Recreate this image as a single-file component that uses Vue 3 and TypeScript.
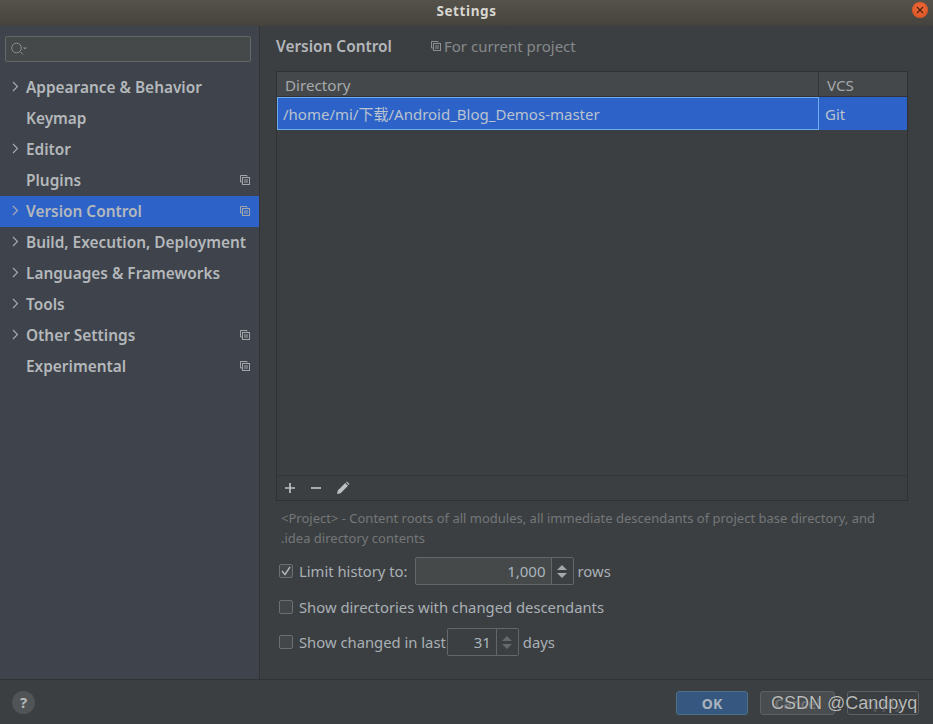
<script setup lang="ts">
interface NavItem { label: string; arrow: boolean; copy: boolean; active?: boolean }
const items: NavItem[] = [
  { label: 'Appearance & Behavior', arrow: true, copy: false },
  { label: 'Keymap', arrow: false, copy: false },
  { label: 'Editor', arrow: true, copy: false },
  { label: 'Plugins', arrow: false, copy: true },
  { label: 'Version Control', arrow: true, copy: true, active: true },
  { label: 'Build, Execution, Deployment', arrow: true, copy: false },
  { label: 'Languages & Frameworks', arrow: true, copy: false },
  { label: 'Tools', arrow: true, copy: false },
  { label: 'Other Settings', arrow: true, copy: true },
  { label: 'Experimental', arrow: false, copy: true },
]
</script>

<template>
  <div class="win">
    <header class="title">
      <span class="title-text">Settings</span>
      <span class="close">
        <svg width="8" height="8" viewBox="0 0 8 8"><path d="M1 1l6 6M7 1L1 7" stroke="#4a2210" stroke-width="1.2" /></svg>
      </span>
    </header>
    <div class="main">
      <aside class="side">
        <div class="search">
          <svg width="18" height="14" viewBox="0 0 18 14" fill="none">
            <circle cx="5.5" cy="6" r="4.8" stroke="#8b8f92" />
            <path d="M9 9.5L12 12.5" stroke="#8b8f92" />
            <path d="M12 5.5h4l-2 2z" fill="#8b8f92" />
          </svg>
        </div>
        <nav class="nav">
          <div v-for="it in items" :key="it.label" class="row" :class="{ active: it.active }">
            <svg v-if="it.arrow" class="arrow" width="7" height="11" viewBox="0 0 7 11" fill="none">
              <path d="M1 1l4.5 4.5L1 10" stroke="#a9adb0" stroke-width="1.1" />
            </svg>
            <span class="row-label">{{ it.label }}</span>
            <svg v-if="it.copy" class="copy" width="10" height="10" viewBox="0 0 10 10" fill="none">
              <path d="M7 1.5V.5H.5V7h1.5" stroke="#a2a6a9" />
              <rect x="2.5" y="2.5" width="7" height="7" stroke="#a2a6a9" />
              <path d="M4 5h4M4 7h4" stroke="#a2a6a9" />
            </svg>
          </div>
        </nav>
      </aside>
      <section class="content">
        <div class="heading">
          <span class="h-title">Version Control</span>
          <svg class="h-copy" width="10" height="10" viewBox="0 0 10 10" fill="none">
            <path d="M7 1.5V.5H.5V7h1.5" stroke="#8b8f92" />
            <rect x="2.5" y="2.5" width="7" height="7" stroke="#8b8f92" />
            <path d="M4 5h4M4 7h4" stroke="#8b8f92" />
          </svg>
          <span class="h-sub">For current project</span>
        </div>
        <div class="table">
          <div class="thead">
            <div class="col-dir th">Directory</div>
            <div class="col-vcs th vcs-th">VCS</div>
          </div>
          <div class="tr">
            <div class="col-dir td-dir">/home/mi/下载/Android_Blog_Demos-master</div>
            <div class="col-vcs td-vcs">Git</div>
          </div>
          <div class="tbody"></div>
          <div class="toolbar">
            <svg width="12" height="12" viewBox="0 0 12 12"><path d="M6 1v10M1 6h10" stroke="#bcc0c3" stroke-width="1.7" /></svg>
            <svg width="12" height="12" viewBox="0 0 12 12"><path d="M1 6h10" stroke="#bcc0c3" stroke-width="1.7" /></svg>
            <svg width="14" height="14" viewBox="0 0 14 14"><path d="M1 13l.8-3.6L9.2 2l2.8 2.8-7.4 7.4zM10 1.2l.9-.7 2.6 2.6-.7.9z" fill="#bcc0c3" /></svg>
          </div>
        </div>
        <p class="hint">&lt;Project&gt; - Content roots of all modules, all immediate descendants of project base directory, and<br />.idea directory contents</p>
        <div class="opt opt-1">
          <span class="cb">
            <svg width="10" height="10" viewBox="0 0 10 10" fill="none"><path d="M1 5l3 3.5L9 1" stroke="#b4b8bb" stroke-width="1.4" /></svg>
          </span>
          <span class="lbl">Limit history to:</span>
          <span class="spin spin-wide">
            <span class="spin-val">1,000</span>
            <span class="spin-btn">
              <i class="up"></i><i class="down"></i>
            </span>
          </span>
          <span class="lbl">rows</span>
        </div>
        <div class="opt opt-2">
          <span class="cb"></span>
          <span class="lbl">Show directories with changed descendants</span>
        </div>
        <div class="opt opt-3">
          <span class="cb"></span>
          <span class="lbl">Show changed in last</span>
          <span class="spin spin-small">
            <span class="spin-val">31</span>
            <span class="spin-btn dim">
              <i class="up"></i><i class="down"></i>
            </span>
          </span>
          <span class="lbl">days</span>
        </div>
      </section>
    </div>
    <footer class="foot">
      <span class="help">?</span>
      <div class="btns">
        <span class="btn ok">OK</span>
        <span class="btn cancel">Cancel</span>
        <span class="btn apply">Apply</span>
      </div>
      <span class="mark">CSDN @Candpyq</span>
    </footer>
  </div>
</template>

<style>
html, body { margin: 0; background: #3c3f41; }
</style>

<style scoped>
.win {
  position: relative;
  width: 933px;
  height: 724px;
  display: flex;
  flex-direction: column;
  overflow: hidden;
  background: #3c3f41;
  font-family: "Noto Sans", "Noto Sans CJK SC", sans-serif;
  color: #b0b4b7;
}
.title {
  flex: 0 0 26px;
  display: flex;
  align-items: center;
  justify-content: center;
  position: relative;
  background: linear-gradient(#55524b, #45433d);
}
.title-text { font-weight: 700; font-size: 13.5px; color: #d8d6d0; letter-spacing: .6px; margin-top: -4px; }
.close {
  position: absolute;
  right: 5px;
  top: 2px;
  width: 16px;
  height: 16px;
  border-radius: 50%;
  background: radial-gradient(circle at 50% 40%, #ee6a3a, #d9501f);
  display: flex;
  align-items: center;
  justify-content: center;
}
.main { flex: 1; display: flex; min-height: 0; }
.side {
  width: 259px;
  background: #3f434b;
  border-right: 1px solid #323436;
  display: flex;
  flex-direction: column;
}
.search {
  margin: 10px 8px 0 5px;
  height: 26px;
  box-sizing: border-box;
  border: 1px solid #63676a;
  border-radius: 2px;
  background: #45494a;
  display: flex;
  align-items: center;
  padding-left: 5px;
}
.nav { margin-top: 10px; }
.row {
  height: 31px;
  display: flex;
  align-items: center;
  position: relative;
  padding-left: 26px;
  font-weight: 600;
  font-size: 15.4px;
  color: #b4b8bb;
}
.row-label { white-space: nowrap; margin-top: -1px; }
.row.active { background: #2d63c8; }
.arrow { position: absolute; left: 12px; top: 9px; }
.copy { position: absolute; left: 240px; top: 10px; }
.content { flex: 1; padding: 0 25px 0 16px; min-width: 0; }
.heading { height: 45px; display: flex; align-items: center; }
.h-title { font-weight: 600; font-size: 15.4px; color: #b4b8bb; width: 155px; margin-top: -4px; white-space: nowrap; }
.h-copy { margin-right: 3px; margin-top: -6px; }
.h-sub { font-size: 15px; color: #85898c; margin-top: -5px; white-space: nowrap; }
.table {
  height: 430px;
  box-sizing: border-box;
  border: 1px solid #2f3133;
  display: flex;
  flex-direction: column;
}
.thead { display: flex; height: 25px; background: #45484a; box-sizing: border-box; border-bottom: 1px solid #323436; flex: none; }
.th { font-size: 15.2px; color: #a5a9ac; display: flex; align-items: center; padding: 2px 0 0 8px; }
.vcs-th { border-left: 1px solid #323436; }
.col-dir { width: 541px; box-sizing: border-box; }
.col-vcs { flex: 1; box-sizing: border-box; }
.tr { display: flex; height: 33px; background: #2d63c8; flex: none; font-size: 15px; color: #b9c2cf; }
.td-dir { border: 1px solid #6eaef0; display: flex; align-items: center; padding-left: 5px; white-space: nowrap; width: 542px; }
.td-vcs { display: flex; align-items: center; padding-left: 6px; }
.tbody { flex: 1; }
.toolbar {
  flex: 0 0 25px;
  box-sizing: border-box;
  border-top: 1px solid #323436;
  display: flex;
  align-items: center;
  padding-left: 7px;
  gap: 14px;
}
.hint {
  margin: 7px 0 0 5px;
  font-size: 13px;
  line-height: 20px;
  color: #73777a;
  white-space: nowrap;
}
.opt { display: flex; align-items: center; font-size: 14.8px; color: #a9b0b6; padding-left: 3px; }
.opt-1 { margin-top: 7px; height: 32px; }
.opt-2 { margin-top: 4px; height: 32px; }
.opt-3 { margin-top: 3px; height: 32px; }
.cb {
  box-sizing: content-box;
  width: 12px;
  height: 12px;
  border: 1px solid #6b6f72;
  border-radius: 2px;
  background: #43474a;
  display: flex;
  align-items: center;
  justify-content: center;
  margin-right: 6px;
  flex: none;
}
.lbl { white-space: nowrap; }
.spin {
  display: flex;
  height: 28px;
  box-sizing: border-box;
  border: 1px solid #63676a;
  border-radius: 2px;
  margin: 0 4px 0 7px;
}
.spin-wide { width: 159px; background: #45494a; }
.spin-small { width: 72px; margin-left: 1px; }
.spin-val {
  flex: 1;
  text-align: right;
  padding-right: 5px;
  line-height: 26px;
  color: #a9b4bd;
  font-size: 15px;
}
.spin-btn {
  width: 21px;
  background: #3c3f41;
  border-left: 1px solid #63676a;
  display: flex;
  flex-direction: column;
  align-items: center;
  justify-content: center;
  gap: 3px;
}
.spin-btn i { display: block; width: 0; height: 0; border-left: 5px solid transparent; border-right: 5px solid transparent; }
.spin-btn .up { border-bottom: 5px solid #a5a9ac; }
.spin-btn .down { border-top: 5px solid #a5a9ac; }
.spin-btn.dim .up { border-bottom-color: #65696c; }
.spin-btn.dim .down { border-top-color: #65696c; }
.foot {
  flex: 0 0 45px;
  box-sizing: border-box;
  border-top: 1px solid #313335;
  position: relative;
  display: flex;
  align-items: flex-start;
  justify-content: space-between;
  padding: 11px 14px 0 12px;
}
.help {
  width: 23px;
  height: 23px;
  border-radius: 50%;
  background: #505456;
  color: #b4b8bb;
  font-weight: 700;
  font-size: 15px;
  line-height: 23px;
  text-align: center;
}
.btns { display: flex; gap: 12px; }
.btn {
  height: 24px;
  box-sizing: border-box;
  border-radius: 3px;
  font-size: 14px;
  font-weight: 700;
  display: flex;
  align-items: center;
  justify-content: center;
}
.ok { width: 72px; background: #365880; border: 1px solid #4c708c; color: #a8b3bd; }
.cancel { width: 75px; background: #4a4d4f; border: 1px solid #5e6163; color: #6f7376; }
.apply { width: 72px; border: 1px solid #5e6163; color: #55585b; }
.mark {
  position: absolute;
  left: 771px;
  top: 13px;
  font-family: "Liberation Sans", sans-serif;
  font-size: 18px;
  color: #b9bbbc;
  text-shadow: 0 0 1px #222;
  white-space: nowrap;
}
</style>
